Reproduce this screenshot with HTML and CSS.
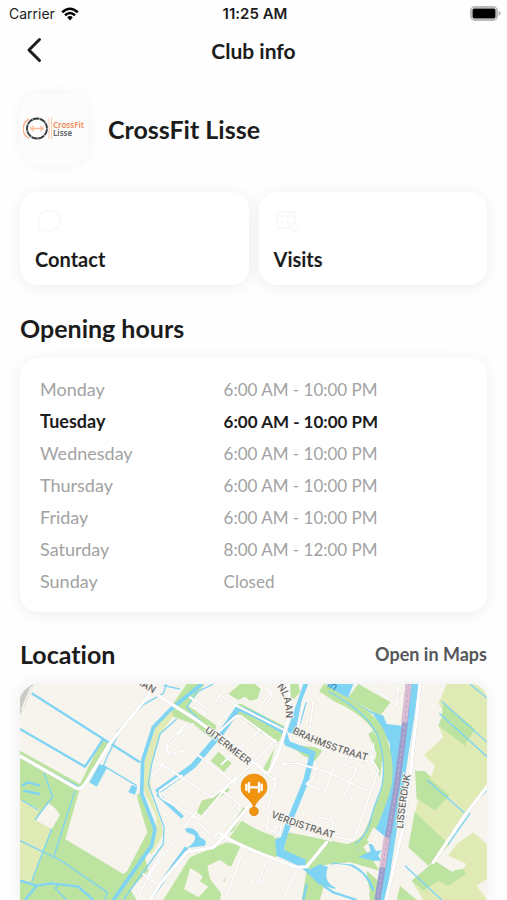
FILE: index.html
```html
<!DOCTYPE html>
<html lang="en">
<head>
  <meta charset="UTF-8" />
  <meta name="viewport" content="width=device-width, initial-scale=1.0"/>
  <title>Club info</title>
  <link rel="stylesheet" href="styles.css">
</head>

<body>
  <div class="status-bar">
    <div class="carrier">
      <span>Carrier</span>
      <svg class="wifi" viewBox="0 0 18 14" aria-hidden="true">
        <path d="M1.2 5.2Q9-1.8 16.8 5.2M4 8.2Q9 3.8 14 8.2" fill="none" stroke="#000" stroke-width="2.5"/>
        <path d="M6.2 10.2Q9 7.8 11.8 10.2L9 13.4Z"/>
      </svg>
    </div>
    <div class="time">11:25 AM</div>
    <svg class="battery" viewBox="0 0 31 15" aria-hidden="true">
      <rect x="1" y="1" width="26" height="13" rx="4" fill="#fff" stroke="#b9b9b9" stroke-width="2"/>
      <rect x="2.5" y="2.5" width="23" height="10" rx="2"/>
      <path d="M28.6 4.8Q33 7.5 28.6 10.2Z" fill="#b9b9b9"/>
    </svg>
  </div>

  <header>
    <button class="back-button" type="button" aria-label="Back">
      <svg viewBox="0 0 16 26"><path d="M13.5 2.5L3 13L13.5 23.5" fill="none" stroke="#1c1c1c" stroke-width="3" stroke-linecap="round" stroke-linejoin="round"/></svg>
    </button>
    <h1>Club info</h1>
  </header>

  <main>
    <div class="club">
      <div class="club-logo">
        <svg viewBox="0 0 62 26" aria-hidden="true">
          <path d="M6 3A11 11 0 0 0 6 22.5" fill="none" stroke="#f5b58f" stroke-width="1.6"/>
          <circle cx="14" cy="12.5" r="10" fill="#fff" stroke="#353b3e" stroke-width="1.8"/>
          <circle cx="14" cy="12.5" r="10" fill="none" stroke="#b9c0c2" stroke-width="2" stroke-dasharray="1 6"/>
          <path d="M8 12.5H20M10 9.5V15.5M18 9.5V15.5M8 11V14M20 11V14" stroke="#f7bb98" stroke-width="1.3"/>
          <path d="M26 2V23M28.5 1V23" stroke="#f6cdb7" stroke-width="1"/>
        </svg>
        <div class="logo-text">
          <div class="logo-cross">CrossFit</div>
          <div class="logo-lisse">Lisse</div>
        </div>
      </div>
      <h2 class="club-name">CrossFit Lisse</h2>
    </div>

    <div class="actions">
      <button class="card action" type="button">
        <svg viewBox="0 0 28 26" aria-hidden="true"><path d="M5 18A11 10 0 1 1 10 22L3 23Z"/></svg>
        <span>Contact</span>
      </button>
      <button class="card action" type="button">
        <svg viewBox="0 0 28 26" aria-hidden="true"><path d="M3 4H21V15M3 4V20H15M3 8H21M8 12V16M13 12V16"/><circle cx="20" cy="19" r="4"/></svg>
        <span>Visits</span>
      </button>
    </div>

    <h2 class="section-title">Opening hours</h2>
    <div class="card hours">
      <table>
        <tr><th scope="row">Monday</th><td>6:00 AM - 10:00 PM</td></tr>
        <tr class="today"><th scope="row">Tuesday</th><td>6:00 AM - 10:00 PM</td></tr>
        <tr><th scope="row">Wednesday</th><td>6:00 AM - 10:00 PM</td></tr>
        <tr><th scope="row">Thursday</th><td>6:00 AM - 10:00 PM</td></tr>
        <tr><th scope="row">Friday</th><td>6:00 AM - 10:00 PM</td></tr>
        <tr><th scope="row">Saturday</th><td>8:00 AM - 12:00 PM</td></tr>
        <tr><th scope="row">Sunday</th><td>Closed</td></tr>
      </table>
    </div>

    <div class="location-head">
      <h2 class="section-title">Location</h2>
      <a href="#map">Open in Maps</a>
    </div>
    <div class="map" id="map">
      <svg viewBox="0 0 1401 648" preserveAspectRatio="xMidYMin slice" role="img" aria-label="Map of the club">
        <!-- parks -->
        <g class="park">
          <path d="M0 200L180 300L245 168L268 172L178 318L136 466L310 570L322 560L382 445L350 335L365 320L410 440L425 450L375 520L385 560L330 615L350 648H0Z"/>
          <path d="M455 65L500 0H555L505 65L590 125L575 165L520 120L450 95Z"/>
          <path d="M625 30L660 0H705L722 15L712 45L690 50L675 38L655 48Z"/>
          <path d="M595 203L635 237L612 264L572 230Z"/>
          <path d="M805 0H835L840 25L822 45L812 40ZM640 62L665 60L800 130L775 175L720 145L650 90Z"/>
          <path d="M805 180L885 190L908 200L885 230L850 215ZM725 262L765 190L745 262Z"/>
          <path d="M530 385L545 350L580 340L620 310L630 318L585 350L545 395Z"/>
          <path d="M620 450L670 370L680 375L640 440ZM665 410Q720 445 760 455L785 465L770 520L700 500L625 465Z"/>
          <path d="M800 445L830 450L980 480L1020 475L1080 560L990 535L930 540L860 555L790 520Z"/>
          <path d="M430 648L510 520L620 475L662 485L635 545L610 600L600 648Z"/>
          <path d="M860 560L915 590L900 648H845ZM1040 560L1075 590L1065 648H1050Z"/>
          <path d="M1015 0L1112 55L1080 95L985 40Z"/>
          <path d="M1185 260L1215 262L1290 335L1245 380L1190 345Z"/>
          <path d="M1185 380L1290 480L1225 545L1165 490Z"/>
          <path d="M1140 605L1190 648H1130Z"/>
        </g>

        <!-- fields -->
        <g class="field">
          <path d="M0 345L60 375L45 408L95 435L65 520L35 592L0 590Z"/>
          <path d="M455 75L425 100L405 115L370 230L365 310L410 400L405 460L380 505L395 510L430 450L425 420L395 340L390 270L405 200L425 145L460 95Z"/>
          <path d="M1280 0H1401V300L1335 388L1290 335L1230 285L1245 245L1212 213L1270 160L1255 125L1275 85L1255 60Z"/>
          <path d="M1195 345L1245 380L1288 335L1335 388L1285 480L1185 385Z"/>
          <path d="M1360 445L1401 480V585L1370 605L1401 648H1210L1175 590L1230 545L1285 560L1325 560L1340 540L1285 515L1310 480Z"/>
        </g>
        <path class="park" d="M1270 55L1365 135L1335 185L1255 125L1265 100ZM1175 590L1245 530L1290 560L1330 555L1338 570L1285 605L1255 590L1210 620Z"/>

        <!-- built-up blocks left open inside the green -->
        <g class="land">
          <path d="M85 358Q105 368 120 393L95 435L45 408Z"/>
          <path d="M510 553Q530 560 548 578L540 592L565 608L535 640L492 615L500 590Z"/>
          <path d="M562 545L600 528L625 545L645 548L610 590L630 615L605 630L570 585Z"/>
          <path d="M1090 105H1140V125Q1105 135 1090 115Z"/>
          <path d="M1245 520L1275 510L1285 540L1310 545L1300 565L1270 545Z"/>
        </g>

        <!-- water -->
        <g class="water-fill">
          <path d="M238 240L262 250L230 308L208 295Z"/>
          <path d="M335 303L352 310L345 332L325 325Z"/>
          <path d="M495 435Q515 425 532 445L540 460Q565 470 555 485L500 492Q535 470 522 453L500 445Z"/>
          <path d="M765 468L800 450L792 498L830 515L865 530L960 560L945 615L895 600L860 565L835 545L770 515Z"/>
          <path d="M865 0L845 50L825 150L800 145L850 0Z"/>
          <path d="M925 0H1000L985 40L1050 80L1090 95L1100 120L1145 125L1130 380L1090 468L1060 430L1110 260L1110 180L1060 90L925 30Z"/>
          <path d="M1015 520L1052 502L1045 478L1058 482L1068 502L1085 498L1075 515L1085 530L1060 530Z"/>
          <path d="M1170 0H1198L1098 648H1065Z"/>
        </g>
        <path class="land" d="M1060 430L1100 465L1085 500L1055 475L1030 490Z"/>
        <g class="water">
          <path class="w8" d="M35 28L120 82L250 165L360 235M0 135L195 248L248 168"/>
          <path class="w5" d="M0 218L180 310M300 140L260 222L250 245L350 305M290 145L370 62L430 28L440 0M430 5L480 15"/>
          <path class="w12" d="M545 0L450 78L400 130L368 230L365 328L405 435L395 485L280 648"/>
          <path class="w5" d="M470 105L420 150L395 240L385 300L405 355L432 430L430 480L310 648"/>
          <path class="w5" d="M72 268L98 338L45 408M5 348L55 378M95 435L35 592M0 470L120 528L262 625L255 648M165 320L100 522"/>
          <path class="w8" d="M0 590L50 605L95 598L175 608L220 648M50 605L15 648M5 305L25 295L60 305M10 320L60 330"/>
          <path class="w5" d="M140 648L105 612L120 600"/>
          <path class="w18" d="M655 72L605 145L520 245L410 325M655 72L710 95L790 140L802 178L878 208L858 290L805 420L782 490"/>
          <path class="w12" d="M412 330L488 400M500 490L460 545L395 640"/>
          <path class="w5" d="M500 70L530 25L580 0M500 70L555 125M840 120L860 50M920 0L1050 90M890 550L930 510L1020 495"/>
          <path class="w8" d="M915 560L940 540L995 545Q1045 570 1060 620M910 605L940 625L1010 648M860 600L850 648"/>
        </g>
        <path class="green-belt" d="M905 10L950 40Q1060 90 1085 160Q1120 260 1090 340Q1070 400 1045 450Q1030 490 930 510L860 545"/>
        <path class="park" d="M1045 150L1060 140L1090 200L1080 280L1060 240L1070 210Z"/>
        <g class="water">
          <path class="w5" d="M925 22Q1050 90 1075 160Q1100 240 1085 310Q1060 370 1045 430Q1030 465 1005 480"/>
          <path class="w5" d="M1350 0L1401 42M1265 52L1401 175M1258 88L1401 218M1220 288L1335 388L1401 318M1350 388L1285 480M1155 545L1265 648"/>
        </g>
        <path class="land" d="M925 545Q940 535 990 545Q1035 565 1045 600L1050 625Q1020 635 950 612Q905 595 925 545Z"/>
        <path class="land" d="M1060 430L1100 462L1090 485L1040 470Z"/>

        <!-- roads -->
        <g class="road main-road">
          <path d="M0 216L168 312Q182 318 195 300L270 178L385 35L400 0"/>
          <path d="M415 35L530 108L715 245L742 272Q778 215 795 140L810 90L805 0"/>
          <path d="M700 350L605 465L580 490L500 505L420 600L390 648M600 448Q650 485 830 550L860 548L920 475"/>
          <path d="M1200 0L1170 278L1150 428L1098 648M1401 308L1335 393L1240 535"/>
        </g>
        <g class="road side-road">
          <path d="M515 70L540 75L560 95M580 68L600 32L640 60L800 142M655 55L590 125M510 40L565 75M735 0L755 35L738 65M760 15L715 75"/>
          <path d="M415 235L485 280L575 340L655 280L765 168M485 275L420 320Q415 335 430 345L540 405L655 268M530 210L680 325M590 150L645 98Q660 90 675 105L770 175M605 240L720 138"/>
          <path d="M440 195L480 145L520 120M450 210Q430 190 450 165L500 120M515 160L490 200L450 210M400 275L430 240M605 320L660 362L655 385L580 460M530 380L390 570L350 648M520 400L575 455"/>
          <path d="M742 272L770 290L740 380M745 380L765 390L775 415L765 445L740 435L745 405M790 390L780 445L765 460M760 290L790 240L830 238L925 265"/>
          <path d="M870 290L860 300L915 322L945 240M890 240L875 290M830 150L850 55L870 45M820 160L960 215L1060 235L1075 260L1000 470L830 430"/>
          <path d="M925 265L1040 320M950 235L1010 255L970 335L1025 358M880 425L900 400L940 410L930 470M1060 180L1055 230M880 50L870 130"/>
          <path d="M668 505L615 648M740 530L715 595L695 590M830 555L790 648M750 545L720 600M370 570L390 590L420 600M400 590L385 570L430 500M1050 0L1130 65L1135 0"/>
        </g>
        <path class="rail-bed" d="M1166 0L1150 160L1128 320L1103 460L1072 648"/>
        <path class="rail-land" d="M1166 0L1152 115M1100 460L1087 550"/>
        <path class="rail" d="M1166 0L1150 160L1128 320L1103 460L1072 648"/>
        <path d="M0 40Q10 15 40 0L18 58L0 92Z" fill="#cbcbc7"/>
        <path d="M5 78L34 8" stroke="#f4f4f0" stroke-width="5"/>

        <!-- street names -->
        <defs>
          <path id="laan-left" d="M331 -12L440 51"/>
          <path id="nlaan" d="M770 8Q802 35 797 125"/>
          <path id="uitermeer" d="M553 142L720 272"/>
          <path id="brahms" d="M816 147Q910 196 1080 241"/>
          <path id="verdi" d="M752 399Q850 440 980 474"/>
          <path id="lisser" d="M1149 434Q1156 350 1180 230"/>
        </defs>
        <g class="street">
          <text><textPath href="#laan-left">LAAN</textPath></text>
          <text><textPath href="#nlaan">NLAAN</textPath></text>
          <text><textPath href="#uitermeer">UITERMEER</textPath></text>
          <text><textPath href="#brahms">BRAHMSSTRAAT</textPath></text>
          <text><textPath href="#verdi">VERDISTRAAT</textPath></text>
          <text><textPath href="#lisser">LISSERDIJK</textPath></text>
        </g>
        <text class="water-name" transform="translate(920 8) rotate(27)">in</text>

        <!-- club pin -->
        <path d="M702 371C692 342 663 337 663 309A39 39 0 0 1 741 309C741 337 712 342 702 371Z" fill="#f0930f" stroke="#e28208" stroke-width="2"/>
        <circle cx="702" cy="382" r="13" fill="#f0930f" stroke="#d97706" stroke-width="2"/>
        <path d="M684 310H720" stroke="#fff" stroke-width="7"/>
        <path d="M687 297V323M717 297V323M679 302V318M725 302V318" stroke="#fff" stroke-width="7" stroke-linecap="round"/>
      </svg>
    </div>
  </main>
</body>
</html>
```
FILE: styles.css
```css
* {
  box-sizing: border-box;
}

body {
  margin: 0;
  height: 100vh;
  display: flex;
  flex-direction: column;
  overflow: hidden;
  background-color: #fefefe;
  color: #1c1c1c;
  font-family: Lato, "Liberation Sans", sans-serif;
  font-variant-ligatures: none;
}

h1, h2 {
  margin: 0;
}

button {
  font-family: inherit;
  color: inherit;
  border: none;
  cursor: pointer;
}

.status-bar {
  display: grid;
  grid-template-columns: 1fr auto 1fr;
  align-items: center;
  height: 27px;
  padding: 0 6px 0 9px;
  font-family: Inter, sans-serif;
  font-size: 14px;
}

.carrier {
  display: flex;
  align-items: center;
  gap: 6px;
}

.wifi {
  width: 18px;
  height: 14px;
}

.time {
  font-size: 15px;
  font-weight: 600;
}

.battery {
  width: 31px;
  height: 15px;
  justify-self: end;
}

header {
  display: grid;
  grid-template-columns: 1fr auto 1fr;
  align-items: center;
  height: 46px;
  padding: 0 20px;
}

h1 {
  font-size: 21px;
}

.back-button {
  display: flex;
  justify-self: start;
  padding: 0 6px;
  background: none;
}

.back-button svg {
  width: 16px;
  height: 26px;
}

main {
  flex: 1;
  min-height: 0;
  display: flex;
  flex-direction: column;
  padding: 20px 20px 0;
}

.club {
  display: flex;
  align-items: center;
  gap: 20px;
}

.club-logo {
  display: flex;
  align-items: center;
  width: 68px;
  height: 72px;
  padding-left: 3px;
  border-radius: 20px;
  background-color: #fcfcfc;
  box-shadow: 0 0 14px rgba(0, 0, 0, 0.05);
}

.club-logo svg {
  width: 62px;
  height: 26px;
  margin-right: -32px;
  flex-shrink: 0;
}

.logo-text {
  font-family: "Noto Sans", sans-serif;
  font-size: 8px;
  font-weight: 600;
  line-height: 8px;
}

.logo-cross {
  color: #f28a55;
}

.logo-lisse {
  color: #5c6468;
}

.club-name, .section-title {
  font-size: 25px;
  line-height: 30px;
}

.card {
  background-color: #fff;
  border-radius: 18px;
  box-shadow: 0 2px 16px rgba(0, 0, 0, 0.07);
}

.actions {
  display: grid;
  grid-template-columns: 1fr 1fr;
  gap: 10px;
  margin: 27px 0 28px;
}

.action {
  display: flex;
  flex-direction: column;
  align-items: flex-start;
  gap: 13px;
  padding: 16px 15px 14px;
  font-size: 20px;
  font-weight: bold;
  line-height: 24px;
}

.action svg {
  width: 28px;
  height: 26px;
  fill: none;
  stroke: #f9f9f9;
  stroke-width: 2;
}

.hours {
  margin: 15px 0 27px;
  padding: 15px 20px;
}

table {
  width: 100%;
  border-collapse: collapse;
}

th, td {
  height: 32px;
  padding: 0;
  text-align: left;
  font-size: 17px;
  font-weight: normal;
  color: #a2a2a2;
}

th {
  width: 43%;
  font-size: 18px;
}

.today th, .today td {
  font-weight: bold;
  color: #1c1c1c;
}

.location-head {
  display: flex;
  align-items: center;
  justify-content: space-between;
  margin-bottom: 15px;
}

.location-head a {
  color: #55575a;
  font-size: 18px;
  font-weight: bold;
  text-decoration: none;
}

.map {
  flex: 1;
  min-height: 0;
  border-radius: 16px 16px 0 0;
  overflow: hidden;
  background-color: #f7f4ee;
  box-shadow: 0 0 16px rgba(0, 0, 0, 0.08);
}

.map svg {
  display: block;
  width: 100%;
  height: 100%;
}

.park {
  fill: #bce3a0;
}

.field {
  fill: #dfeab5;
}

.land {
  fill: #f7f4ee;
}

.green-belt {
  fill: none;
  stroke: #bce3a0;
  stroke-width: 28px;
}

.water-fill {
  fill: #7fd4f4;
}

.water {
  fill: none;
  stroke: #7fd4f4;
  stroke-linejoin: round;
}

.w5 {
  stroke-width: 4px;
}

.w8 {
  stroke-width: 7px;
}

.w12 {
  stroke-width: 11px;
}

.w18 {
  stroke-width: 17px;
}

.road {
  fill: none;
  stroke: #fff;
  stroke-linejoin: round;
  stroke-linecap: round;
  filter: drop-shadow(0 0 2px #bdb8b1);
}

.main-road {
  stroke-width: 10px;
}

.side-road {
  stroke-width: 6px;
}

.rail-bed {
  fill: none;
  stroke: #9b9fcf;
  stroke-width: 18px;
}

.rail-land {
  fill: none;
  stroke: #dcbfd2;
  stroke-width: 18px;
}

.rail {
  fill: none;
  stroke: #c0aecb;
  stroke-width: 4px;
  stroke-dasharray: 9 7;
}

.street {
  font-family: Inter, sans-serif;
  font-size: 29px;
  font-weight: 500;
  fill: #656565;
  stroke: #f7f4ee;
  stroke-width: 5px;
  paint-order: stroke;
}

.water-name {
  font-family: Inter, sans-serif;
  font-size: 34px;
  font-style: italic;
  fill: #2f8cc4;
}
```
